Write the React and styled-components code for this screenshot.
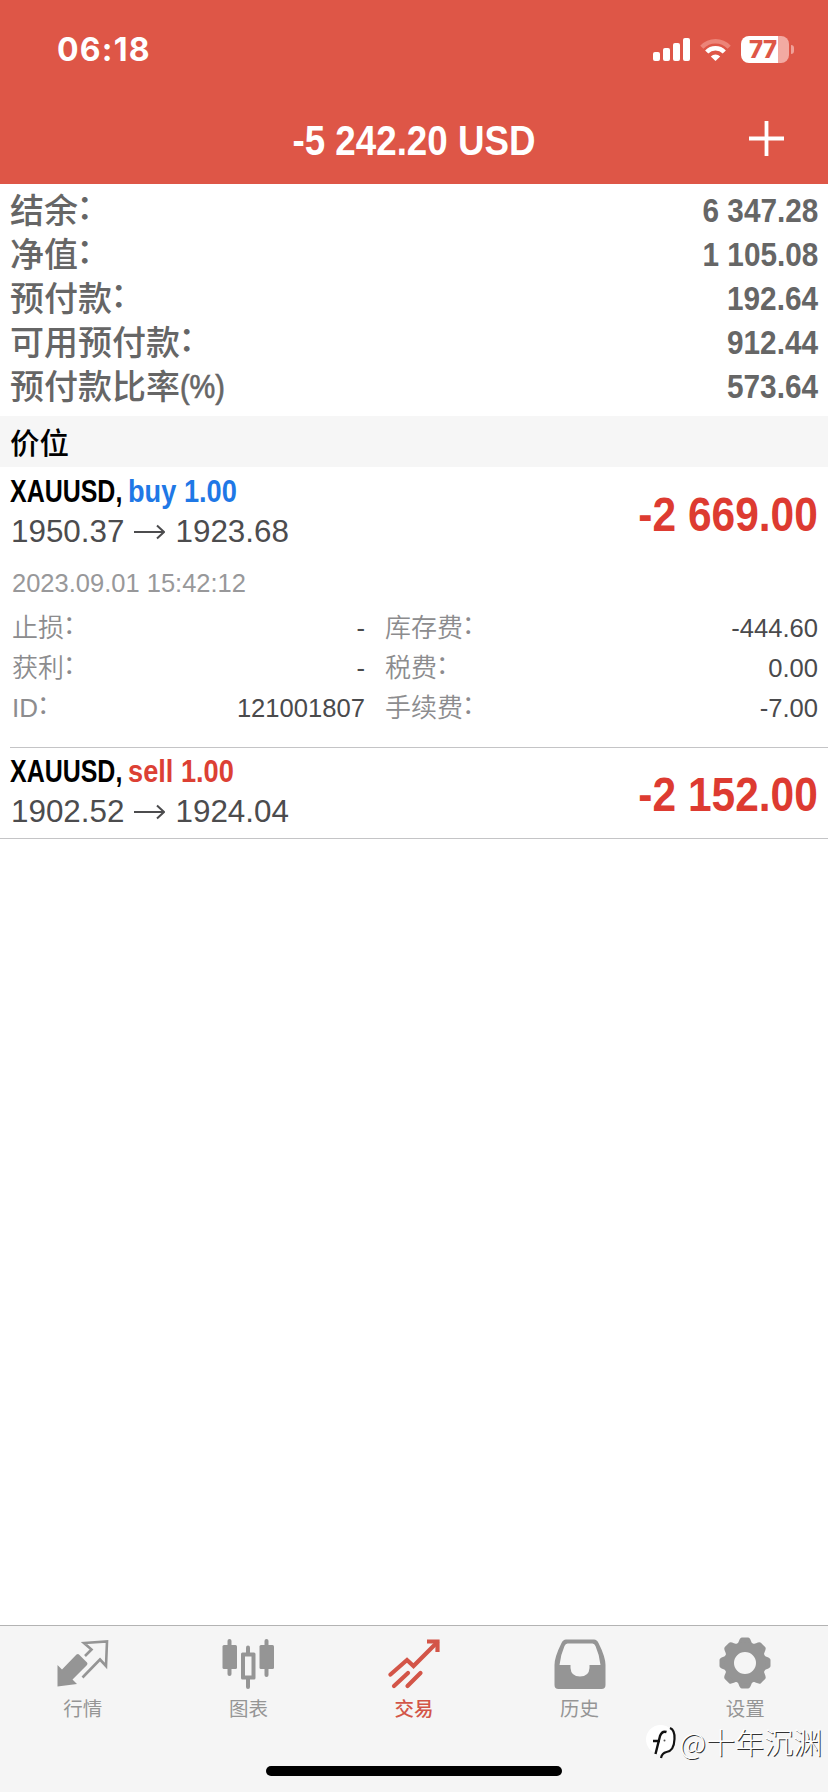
// > React
import { Fragment } from 'react';

// > Css
import styled, { createGlobalStyle } from 'styled-components';

const GlobalStyle = createGlobalStyle`
    * {
        box-sizing: border-box;
    }
    body {
        margin: 0;
        background: #fff;
        font-family: "Liberation Sans", "Noto Sans CJK SC", sans-serif;
        overflow: hidden;
    }
    svg {
        display: block;
    }
`;

const sans = '"Liberation Sans", "Noto Sans CJK SC", sans-serif';

const Screen = styled.div`
    width: 828px;
    height: 1792px;
    display: flex;
    flex-direction: column;
    background: #fff;
`;

// > Condensed bold text
const Condensed = styled.span`
    display: inline-block;
    font-family: ${sans};
    font-weight: 700;
    white-space: nowrap;
    transform: scaleX(${props => props.$scale || 0.875});
    transform-origin: ${props => props.$origin || 'left'};
`;
// the full-width colon sits too low next to the labels
const Colon = styled.span`
    display: inline-block;
    transform: translate(-0.05em, -0.11em);
`;

// > Header
const Header = styled.header`
    height: 184px;
    background: #de5647;
    color: #fff;
`;
const StatusBar = styled.div`
    height: 98px;
    padding: 1px 34px 0 57px;
    display: flex;
    align-items: center;
    justify-content: space-between;
`;
const Time = styled.span`
    font: 700 32px Inter, sans-serif;
    letter-spacing: 1.2px;
`;
const StatusIcons = styled.div`
    display: flex;
    align-items: center;
    gap: 10px;
`;
const Battery = styled.div`
    display: flex;
    align-items: center;
    gap: 2px;
`;
const BatteryBody = styled.div`
    width: 48px;
    height: 27px;
    padding-left: 8px;
    border-radius: 8px;
    background: linear-gradient(to right, #fff 77%, #f2aaa2 77%);
    color: #de5647;
    font: 800 24px/27px Inter, sans-serif;
    letter-spacing: -0.5px;
`;
const BatteryTip = styled.div`
    width: 3px;
    height: 9px;
    border-radius: 0 4px 4px 0;
    background: #f0a198;
`;
const TitleBar = styled.div`
    height: 86px;
    padding: 0 44px;
    display: grid;
    grid-template-columns: 35px 1fr 35px;
    align-items: center;
`;
const Title = styled(Condensed).attrs({ as: 'h1' })`
    grid-column: 2;
    margin: 0;
    text-align: center;
    font-size: 42px;
    line-height: 50px;
`;
const AddButton = styled.div`
    padding-bottom: 5px;
`;

// > Account summary
const Summary = styled.section`
    height: 232px;
    padding: 4px 10px 8px;
`;
const SummaryRow = styled.div`
    height: 44px;
    display: flex;
    align-items: center;
    justify-content: space-between;
    color: #666;
`;
const SummaryLabel = styled.span`
    padding-top: 2px;
    font: 500 34px/42px ${sans};
`;
const Percent = styled(Condensed)`
    width: 44px;
    padding-bottom: 2px;
    vertical-align: bottom;
    line-height: 40px;
    font-weight: 400;
    -webkit-text-stroke: 0.7px #666;
`;
const SummaryValue = styled(Condensed)`
    font-size: 34px;
    line-height: 44px;
`;
const SectionTitle = styled.h2`
    height: 51px;
    margin: 0;
    padding: 0 10px;
    background: #f6f6f6;
    font: 500 29.5px/51px "Noto Sans CJK SC", sans-serif;
    color: #000;
`;

// > Positions
const Position = styled.article`
    height: ${props => (props.$open ? '281px' : '91px')};
    margin-left: ${props => (props.$open ? '10px' : '0')};
    padding: ${props => (props.$open ? '4px 10px 0 0' : '3px 10px 0')};
    border-bottom: 1px solid #c4c4c6;
`;
const PositionHead = styled.div`
    height: 80px;
    display: flex;
    justify-content: space-between;
    align-items: center;
`;
const Deal = styled.div`
    display: flex;
    font-size: 32px;
    line-height: 40px;
    color: #000;
`;
const Symbol = styled(Condensed)`
    width: 118px;
`;
const Side = styled(Condensed)`
    color: ${props => (props.$side === 'buy' ? '#1f78e6' : '#dc4034')};
`;
const Price = styled.div`
    padding: 1px 0 0 1px;
    display: flex;
    align-items: center;
    gap: 10px;
    font-size: 31.4px;
    line-height: 40px;
    color: #4c4c4e;
`;
const Profit = styled(Condensed)`
    padding-top: 7px;
    font-size: 48px;
    line-height: 56px;
    color: #dd3b31;
`;
const OpenTime = styled.div`
    padding: 18px 0 0 2px;
    font-size: 25.5px;
    line-height: 28px;
    color: #98989a;
`;
const Details = styled.div`
    padding: 11px 0 0 2px;
    display: grid;
    grid-template-columns: 353px 433px;
    grid-auto-rows: 40px;
    column-gap: 20px;
`;
const Detail = styled.div`
    display: flex;
    justify-content: space-between;
    font-size: 26px;
    line-height: 40px;
    font-weight: 350;
    color: #8c8c8e;
`;
const DetailValue = styled.span`
    font-size: 25.6px;
    color: #4a4a4c;
`;

// > Bottom bar
const TabBar = styled.nav`
    position: relative;
    height: 167px;
    margin-top: auto;
    padding-top: 11px;
    display: flex;
    flex-direction: column;
    justify-content: space-between;
    border-top: 1px solid #b3b3b3;
    background: #f5f5f5;
`;
const Tabs = styled.div`
    display: grid;
    grid-template-columns: repeat(5, 1fr);
`;
const Tab = styled.div`
    display: flex;
    flex-direction: column;
    align-items: center;
    gap: 4px;
    color: ${props => (props.$active ? '#d35548' : '#959595')};
    font: ${props => (props.$active ? 500 : 400)} 19.5px/30px "Noto Sans CJK SC", sans-serif;
`;
const HomeIndicator = styled.div`
    width: 296px;
    height: 10px;
    margin: 0 auto 16px;
    border-radius: 5px;
    background: #000;
`;
const Watermark = styled.div`
    position: absolute;
    right: 6px;
    bottom: 33px;
    display: flex;
    align-items: center;
    gap: 3px;
    color: #fff;
    font: 300 29px/36px "Noto Sans CJK SC", sans-serif;
    text-shadow: 1px 1px 0 #333;
    white-space: nowrap;
`;

const SignalIcon = () => (
    <svg width="37" height="23" viewBox="0 0 37 23" fill="#fff">
        <rect x="0" y="14" width="7" height="9" rx="2" />
        <rect x="10" y="10" width="7" height="13" rx="2" />
        <rect x="20" y="5" width="7" height="18" rx="2" />
        <rect x="30" y="0" width="7" height="23" rx="2" />
    </svg>
);

const WifiIcon = () => (
    <svg width="31" height="23" viewBox="0 0 31 23" fill="none" strokeWidth="4.4">
        <path d="M1.8 9.2C9.5 1.2 21.5 1.2 29.2 9.2" stroke="#ec8478" />
        <path d="M6.7 14C11.5 9 19.5 9 24.3 14" stroke="#fff" />
        <path d="M10.8 18.6C13.5 15.8 17.5 15.8 20.2 18.6L15.5 23Z" fill="#fff" />
    </svg>
);

const PlusIcon = () => (
    <svg width="35" height="35" viewBox="0 0 35 35" stroke="#fff" strokeWidth="3.8">
        <path d="M17.5 0V35M0 17.5H35" />
    </svg>
);

const ArrowIcon = () => (
    <svg width="31" height="16" viewBox="0 0 31 16" fill="none" stroke="#4c4c4e" strokeWidth="2">
        <path d="M0 8H30M23 1.5L30 8L23 14.5" />
    </svg>
);

const QuotesIcon = () => (
    <svg width="52" height="52" viewBox="0 0 52 52">
        <path d="M22 17.5L30 25.5Q31 26.5 30 28L15.5 42.5L20 47L.5 49.500V28L5 32.500L19.500 17.500Q21 16.500 22 17.500Z" fill="currentColor" />
        <path d="M28 19L34.5 12.5L27 6L50 4.5L49 29L43 22.5L25.5 40.5" fill="none" stroke="currentColor" strokeWidth="2.6" />
    </svg>
);

const ChartIcon = () => (
    <svg width="52" height="52" viewBox="0 0 52 52" fill="currentColor">
        <rect x="5.5" y="2" width="4" height="37" rx="2" />
        <rect x="0.5" y="8" width="14.5" height="24" rx="1.5" />
        <rect x="24" y="8.5" width="4" height="10" rx="2" />
        <rect x="24" y="40" width="4" height="12" rx="2" />
        <path d="M19 17Q19 15.5 20.5 15.5H32Q33.5 15.5 33.5 17V41Q33.5 42.5 32 42.5H20.5Q19 42.5 19 41ZM23 19.5V38.5H29.5V19.5Z" fillRule="evenodd" />
        <rect x="42.5" y="2" width="4" height="38" rx="2" />
        <rect x="37.5" y="8" width="14.5" height="24" rx="1.5" />
    </svg>
);

const TradeIcon = () => (
    <svg width="52" height="52" viewBox="0 0 52 52" fill="none" stroke="currentColor" strokeWidth="4.2" strokeLinecap="round">
        <path d="M2.5 37.5L19 23L25.5 29L49 5.5" />
        <path d="M39 4.5H49.5V15" strokeLinecap="butt" />
        <path d="M6 49L20 36M19.5 49L32.5 36" />
    </svg>
);

const HistoryIcon = () => (
    <svg width="52" height="52" viewBox="0 0 52 52">
        <path d="M12 2.5H40Q43 2.5 44.5 6Q51.5 20 51.5 28V48Q51.5 52 47.5 52H4.5Q.5 52 .5 48V28Q.5 20 7.5 6Q9 2.5 12 2.5ZM13.5 6.5Q11.5 6.5 10.5 9Q6.5 18 5.5 28H16.5V31Q17 39.5 26 39.5Q35 39.5 35.5 31V28H46.5Q45.5 18 41.5 9Q40.5 6.5 38.5 6.5Z" fill="currentColor" fillRule="evenodd" />
    </svg>
);

const SettingsIcon = () => (
    <svg width="52" height="52" viewBox="-26 -26 52 52" fill="currentColor">
        {[0, 45, 90, 135, 180, 225, 270, 315].map(angle => (
            <path key={angle} transform={`rotate(${angle})`} d="M-9 -18C-6 -19 -6 -25.5 -3 -25.5H3C6 -25.5 6 -19 9 -18Z" />
        ))}
        <circle r="16" fill="none" stroke="currentColor" strokeWidth="10" />
    </svg>
);

const WatermarkLogo = () => (
    <svg width="31" height="36" viewBox="0 0 31 36" fill="none">
        <circle cx="14.5" cy="16.5" r="14.5" fill="#fff" />
        <path d="M20.5 9Q16 7.5 14 13L9.5 31M7 18H14" stroke="#111" strokeWidth="2.4" />
        <path d="M24 5Q29 7 28.5 16Q28 28 20.5 29Q16 30 15 35" stroke="#111" strokeWidth="2.2" />
        <circle cx="18.5" cy="17.5" r="1" fill="#555" />
    </svg>
);

const summary = [
    ['结余', '6 347.28'],
    ['净值', '1 105.08'],
    ['预付款', '192.64'],
    ['可用预付款', '912.44'],
    ['预付款比率', '573.64', '(%)'],
];

const positions = [
    {
        side: 'buy',
        from: '1950.37',
        to: '1923.68',
        profit: '-2 669.00',
        time: '2023.09.01 15:42:12',
        details: [
            ['止损', '-'],
            ['库存费', '-444.60'],
            ['获利', '-'],
            ['税费', '0.00'],
            ['ID', '121001807'],
            ['手续费', '-7.00'],
        ],
    },
    { side: 'sell', from: '1902.52', to: '1924.04', profit: '-2 152.00' },
];

const tabs = [
    ['行情', QuotesIcon],
    ['图表', ChartIcon],
    ['交易', TradeIcon],
    ['历史', HistoryIcon],
    ['设置', SettingsIcon],
];

function App() {
    return (
        <Screen lang="zh-CN">
            <GlobalStyle />
            <Header>
                <StatusBar>
                    <Time>06:18</Time>
                    <StatusIcons>
                        <SignalIcon />
                        <WifiIcon />
                        <Battery>
                            <BatteryBody>77</BatteryBody>
                            <BatteryTip />
                        </Battery>
                    </StatusIcons>
                </StatusBar>
                <TitleBar>
                    <Title $origin="center">-5 242.20 USD</Title>
                    <AddButton>
                        <PlusIcon />
                    </AddButton>
                </TitleBar>
            </Header>
            <Summary>
                {summary.map(([label, value, unit]) => (
                    <SummaryRow key={label}>
                        <SummaryLabel>
                            {label}
                            {unit ? <Percent $scale={0.85}>{unit}</Percent> : <Colon>：</Colon>}
                        </SummaryLabel>
                        <SummaryValue $origin="right">{value}</SummaryValue>
                    </SummaryRow>
                ))}
            </Summary>
            <SectionTitle>价位</SectionTitle>
            {positions.map(item => (
                <Position key={item.side} $open={!!item.details}>
                    <PositionHead>
                        <div>
                            <Deal>
                                <Symbol $scale={0.78}>XAUUSD,</Symbol>
                                <Side $scale={0.85} $side={item.side}>{item.side} 1.00</Side>
                            </Deal>
                            <Price>
                                {item.from}
                                <ArrowIcon />
                                {item.to}
                            </Price>
                        </div>
                        <Profit $scale={0.885} $origin="right">{item.profit}</Profit>
                    </PositionHead>
                    {item.details && (
                        <Fragment>
                            <OpenTime>{item.time}</OpenTime>
                            <Details>
                                {item.details.map(([label, value]) => (
                                    <Detail key={label}>
                                        <span>
                                            {label}
                                            <Colon>：</Colon>
                                        </span>
                                        <DetailValue>{value}</DetailValue>
                                    </Detail>
                                ))}
                            </Details>
                        </Fragment>
                    )}
                </Position>
            ))}
            <TabBar>
                <Tabs>
                    {tabs.map(([label, Icon]) => (
                        <Tab key={label} $active={label === '交易'}>
                            <Icon />
                            {label}
                        </Tab>
                    ))}
                </Tabs>
                <HomeIndicator />
                <Watermark>
                    <WatermarkLogo />
                    @十年沉渊
                </Watermark>
            </TabBar>
        </Screen>
    );
}

export default App;
